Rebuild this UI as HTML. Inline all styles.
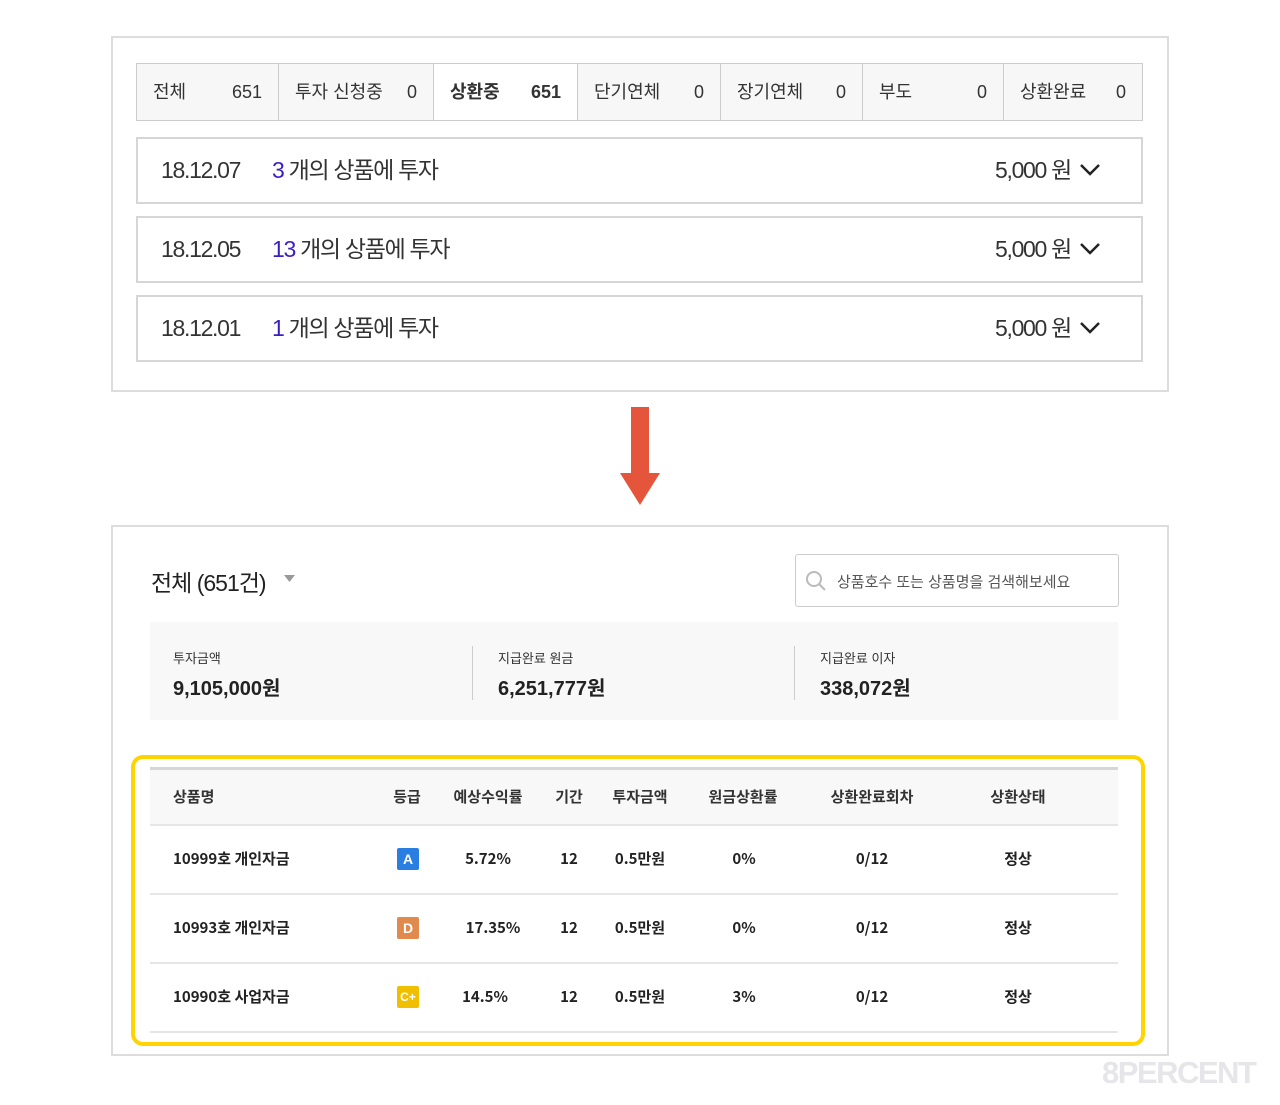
<!DOCTYPE html>
<html><head><meta charset="utf-8"><style>
*{margin:0;padding:0;box-sizing:border-box}
body{width:1280px;height:1105px;background:#fff;position:relative;font-family:"Liberation Sans","Noto Sans CJK KR",sans-serif;color:#222;overflow:hidden}
.abs{position:absolute}
.box{border:2px solid #ddd}
.tab{position:absolute;top:63px;height:58px;background:#f7f7f7;border:1px solid #ccc;font-size:18px;line-height:56px;color:#333}
.tab span{position:absolute;left:16px}.tab b{position:absolute;right:16px;font-weight:normal}
.row{position:absolute;left:136px;width:1007px;height:67px;border:2px solid #d6d6d6;font-size:23px;line-height:63px;color:#333;letter-spacing:-1.3px}
.row .d{position:absolute;left:23px}.row .t{position:absolute;left:134px}.row .n{color:#3a1ec4}
.row .a{position:absolute;right:70px}
.row svg{position:absolute;right:40px;top:24px}
.th{position:absolute;top:787px;font-size:15px;font-weight:bold;color:#333;transform:translateX(-50%);line-height:20px;font-family:"Noto Sans CJK KR",sans-serif}
.td{position:absolute;font-size:15px;font-weight:bold;color:#222;transform:translateX(-50%);line-height:20px;font-family:"Noto Sans CJK KR",sans-serif}
.g{position:absolute;left:397px;width:22px;height:22px;border-radius:2px;color:#fff;font-size:14px;font-weight:bold;text-align:center;line-height:22px}
.hl{position:absolute;left:150px;width:968px;height:2px;background:#e6e6e6}
</style></head><body>
<div class="abs box" style="left:111px;top:36px;width:1058px;height:356px"></div>
<div class="tab" style="left:136px;width:143px"><span>전체</span><b>651</b></div>
<div class="tab" style="left:278px;width:156px"><span>투자 신청중</span><b>0</b></div>
<div class="tab" style="left:433px;width:145px;background:#fff;font-weight:bold"><span>상환중</span><b style="font-weight:bold">651</b></div>
<div class="tab" style="left:577px;width:144px"><span>단기연체</span><b>0</b></div>
<div class="tab" style="left:720px;width:143px"><span>장기연체</span><b>0</b></div>
<div class="tab" style="left:862px;width:142px"><span>부도</span><b>0</b></div>
<div class="tab" style="left:1003px;width:140px"><span>상환완료</span><b>0</b></div>
<div class="row" style="top:137px"><span class="d">18.12.07</span><span class="t"><span class="n">3</span> 개의 상품에 투자</span><span class="a">5,000 원</span><svg width="22" height="14"><path d="M2 2 L11 11 L20 2" fill="none" stroke="#222" stroke-width="2.5"/></svg></div>
<div class="row" style="top:216px"><span class="d">18.12.05</span><span class="t"><span class="n">13</span> 개의 상품에 투자</span><span class="a">5,000 원</span><svg width="22" height="14"><path d="M2 2 L11 11 L20 2" fill="none" stroke="#222" stroke-width="2.5"/></svg></div>
<div class="row" style="top:295px"><span class="d">18.12.01</span><span class="t"><span class="n">1</span> 개의 상품에 투자</span><span class="a">5,000 원</span><svg width="22" height="14"><path d="M2 2 L11 11 L20 2" fill="none" stroke="#222" stroke-width="2.5"/></svg></div>

<svg class="abs" style="left:618px;top:406px" width="44" height="100"><rect x="13" y="1" width="18" height="67" fill="#e5553c"/><path d="M2 67 L42 67 L22 99 Z" fill="#e5553c"/></svg>

<div class="abs box" style="left:111px;top:525px;width:1058px;height:531px"></div>
<div class="abs" style="left:151px;top:564px;font-size:23px;letter-spacing:-1px;color:#222">전체 (651건)</div>
<svg class="abs" style="left:284px;top:575px" width="12" height="8"><path d="M0 0 L11 0 L5.5 7Z" fill="#999"/></svg>
<div class="abs" style="left:795px;top:554px;width:324px;height:53px;border:1px solid #ccc;border-radius:3px"></div>
<svg class="abs" style="left:805px;top:570px" width="22" height="22"><circle cx="9" cy="9" r="7" fill="none" stroke="#bbb" stroke-width="2"/><path d="M14 14 L20 20" stroke="#bbb" stroke-width="2"/></svg>
<div class="abs" style="left:837px;top:571px;font-size:15px;color:#555">상품호수 또는 상품명을 검색해보세요</div>
<div class="abs" style="left:150px;top:622px;width:968px;height:98px;background:#f8f8f8"></div>
<div class="abs" style="left:472px;top:646px;width:1px;height:54px;background:#ccc"></div>
<div class="abs" style="left:794px;top:646px;width:1px;height:54px;background:#ccc"></div>
<div class="abs" style="left:173px;top:648px;font-size:13px;color:#333">투자금액</div>
<div class="abs" style="left:173px;top:672px;font-size:20px;font-weight:bold;color:#222">9,105,000원</div>
<div class="abs" style="left:498px;top:648px;font-size:13px;color:#333">지급완료 원금</div>
<div class="abs" style="left:498px;top:672px;font-size:20px;font-weight:bold;color:#222">6,251,777원</div>
<div class="abs" style="left:820px;top:648px;font-size:13px;color:#333">지급완료 이자</div>
<div class="abs" style="left:820px;top:672px;font-size:20px;font-weight:bold;color:#222">338,072원</div>

<div class="abs" style="left:131px;top:755px;width:1014px;height:291px;border:4px solid #ffd400;border-radius:12px"></div>
<div class="abs" style="left:150px;top:767px;width:968px;height:58px;background:#f8f8f8;border-top:3px solid #d6d6d6"></div>
<div class="hl" style="top:824px"></div><div class="hl" style="top:893px"></div><div class="hl" style="top:962px"></div><div class="hl" style="top:1031px"></div>
<div class="th" style="left:173px;transform:none">상품명</div>
<div class="th" style="left:407px">등급</div><div class="th" style="left:488px">예상수익률</div><div class="th" style="left:569px">기간</div><div class="th" style="left:640px">투자금액</div><div class="th" style="left:743px">원금상환률</div><div class="th" style="left:872px">상환완료회차</div><div class="th" style="left:1018px">상환상태</div>

<div class="td" style="left:173px;top:849px;transform:none">10999호 개인자금</div>
<div class="g" style="top:848px;background:#2a7de1">A</div>
<div class="td" style="left:488px;top:849px">5.72%</div><div class="td" style="left:569px;top:849px">12</div><div class="td" style="left:640px;top:849px">0.5만원</div><div class="td" style="left:744px;top:849px">0%</div><div class="td" style="left:872px;top:849px">0/12</div><div class="td" style="left:1018px;top:849px">정상</div>

<div class="td" style="left:173px;top:918px;transform:none">10993호 개인자금</div>
<div class="g" style="top:917px;background:#e08a4e">D</div>
<div class="td" style="left:493px;top:918px">17.35%</div><div class="td" style="left:569px;top:918px">12</div><div class="td" style="left:640px;top:918px">0.5만원</div><div class="td" style="left:744px;top:918px">0%</div><div class="td" style="left:872px;top:918px">0/12</div><div class="td" style="left:1018px;top:918px">정상</div>

<div class="td" style="left:173px;top:987px;transform:none">10990호 사업자금</div>
<div class="g" style="top:986px;background:#f0c000;font-size:12px">C+</div>
<div class="td" style="left:485px;top:987px">14.5%</div><div class="td" style="left:569px;top:987px">12</div><div class="td" style="left:640px;top:987px">0.5만원</div><div class="td" style="left:744px;top:987px">3%</div><div class="td" style="left:872px;top:987px">0/12</div><div class="td" style="left:1018px;top:987px">정상</div>

<div class="abs" style="left:1102px;top:1055px;font-size:31px;font-weight:bold;color:#e6e6ea;letter-spacing:-1.5px">8PERCENT</div>
</body></html>
